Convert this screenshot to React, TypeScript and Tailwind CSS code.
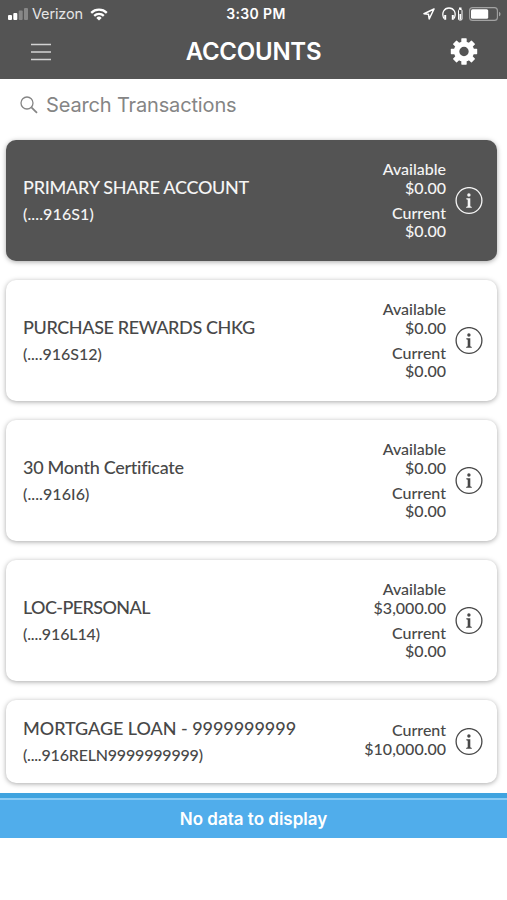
import clsx from 'clsx';

type Balance = {
	label: string;
	amount: string;
};

type Account = {
	name: string;
	nameClass: string;
	mask: string;
	maskClass: string;
	balances: Balance[];
	primary?: boolean;
	compact?: boolean;
};

const accounts: Account[] = [
	{
		name: 'PRIMARY SHARE ACCOUNT',
		nameClass: 'tracking-[-0.26px]',
		mask: '(....916S1)',
		maskClass: 'tracking-[0.13px]',
		primary: true,
		balances: [
			{ label: 'Available', amount: '$0.00' },
			{ label: 'Current', amount: '$0.00' },
		],
	},
	{
		name: 'PURCHASE REWARDS CHKG',
		nameClass: 'tracking-[-0.38px]',
		mask: '(....916S12)',
		maskClass: 'tracking-[0px]',
		balances: [
			{ label: 'Available', amount: '$0.00' },
			{ label: 'Current', amount: '$0.00' },
		],
	},
	{
		name: '30 Month Certificate',
		nameClass: 'tracking-[-0.28px]',
		mask: '(....916I6)',
		maskClass: 'tracking-[0.1px]',
		balances: [
			{ label: 'Available', amount: '$0.00' },
			{ label: 'Current', amount: '$0.00' },
		],
	},
	{
		name: 'LOC-PERSONAL',
		nameClass: 'tracking-[-0.6px]',
		mask: '(....916L14)',
		maskClass: 'tracking-[-0.12px]',
		balances: [
			{ label: 'Available', amount: '$3,000.00' },
			{ label: 'Current', amount: '$0.00' },
		],
	},
	{
		name: 'MORTGAGE LOAN - 9999999999',
		nameClass: 'tracking-[-0.05px]',
		mask: '(....916RELN9999999999)',
		maskClass: 'tracking-[-0.19px]',
		compact: true,
		balances: [{ label: 'Current', amount: '$10,000.00' }],
	},
];

function StatusBar() {
	return (
		<div className="grid h-7 grid-cols-3 items-center text-white">
			<div className="flex items-center pl-2">
				<svg width="20" height="14" viewBox="0 0 20 14" fill="currentColor">
					<rect x="0" y="8" width="4" height="5" rx="1" />
					<rect x="5.3" y="6" width="4" height="7" rx="1" />
					<rect x="10.7" y="3.5" width="4" height="9.5" rx="1" opacity=".3" />
					<rect x="16" y="1" width="4" height="12" rx="1" opacity=".3" />
				</svg>
				<span className="ml-1 text-[14.5px] leading-none tracking-[-0.15px] text-[#e6e6e6]">Verizon</span>
				<svg className="ml-[7px]" width="18" height="13" viewBox="0 0 18 13" fill="none" stroke="currentColor" strokeWidth="2.3">
					<path d="M1.2 4.8a11.2 11.2 0 0 1 15.6 0" />
					<path d="M4.2 7.9a6.9 6.9 0 0 1 9.6 0" />
					<path d="M9 12.6 6.3 9.9a3.9 3.9 0 0 1 5.4 0z" fill="currentColor" stroke="none" />
				</svg>
			</div>
			<span className="pl-[5px] text-center text-[14px] font-semibold leading-none tracking-[0.35px]">3:30 PM</span>
			<div className="flex items-center justify-end pr-1.5">
				<svg width="12" height="12" viewBox="0 0 12 12" fill="none" stroke="currentColor" strokeWidth="1.5" strokeLinejoin="round">
					<path d="M11 1 1 5.7l4.5.6.7 4.7z" />
				</svg>
				<svg className="ml-[7px]" width="21" height="14" viewBox="0 0 21 14" fill="none" stroke="currentColor">
					<path d="M1.8 11.5C-.8 5.5 2.3 1 7 1s7.8 4.5 5.2 10.5" strokeWidth="1.3" />
					<path d="M3.2 8v4.8M10.8 8v4.8" strokeWidth="2" />
					<rect x="16.5" y="2.5" width="3.5" height="10.5" rx="1" />
					<path d="M17 1.2h2.5M18.25 7v5.5" strokeWidth="1.6" />
				</svg>
				<svg className="ml-1.5" width="32" height="14" viewBox="0 0 32 14">
					<rect x=".6" y=".6" width="27.8" height="12.8" rx="3" fill="none" stroke="#a3a3a3" strokeWidth="1.1" />
					<rect x="2" y="2.3" width="17.2" height="9.4" rx="1.5" fill="white" />
					<path d="M30 4.7c2 .8 2 3.8 0 4.6z" fill="#a3a3a3" />
				</svg>
			</div>
		</div>
	);
}

function MenuIcon() {
	return (
		<svg width="20" height="18" viewBox="0 0 20 18" stroke="#d2d2d2" strokeWidth="1.7">
			<path d="M0 1.5h20M0 9h20M0 16.5h20" />
		</svg>
	);
}

function GearIcon() {
	return (
		<svg width="28" height="28" viewBox="-14 -13.5 28 28" fill="none">
			<circle r="7.4" stroke="white" strokeWidth="5.4" />
			{[0, 45, 90, 135, 180, 225, 270, 315].map((deg) => (
				<rect key={deg} x="-2.7" y="-13.2" width="5.4" height="5" rx=".6" fill="white" transform={`rotate(${deg})`} />
			))}
		</svg>
	);
}

function InfoIcon() {
	return (
		<svg width="28" height="28" viewBox="0 0 28 28" fill="currentColor">
			<circle cx="14" cy="13.5" r="12.9" fill="none" stroke="currentColor" strokeWidth="1.3" />
			<circle cx="13.9" cy="8" r="1.7" />
			<path d="M11.3 11.3h4v8l1.5.6v.8h-5.7v-.8l1.6-.6v-6.6l-1.4-.5z" />
		</svg>
	);
}

function AccountCard({ account }: { account: Account }) {
	return (
		<li
			className={clsx(
				'flex items-center rounded-[10px] pl-[17px] pr-3.5 shadow-[0_1px_5px_rgba(0,0,0,0.34)]',
				account.compact ? 'h-[83px]' : 'h-[121px]',
				account.primary ? 'bg-[#545454] text-[#f5f5f5]' : 'bg-white text-[#484848]',
			)}
		>
			<div className="flex-1 whitespace-nowrap pb-px">
				<p className={clsx('text-[18px] leading-[29px]', account.nameClass)}>{account.name}</p>
				<p className={clsx('-mt-0.5 text-[16px] leading-[27px]', account.maskClass)}>{account.mask}</p>
			</div>
			<div className={clsx('space-y-1.5 text-right text-[16px] leading-[18.7px]', account.compact && 'pb-1')}>
				{account.balances.map((balance) => (
					<div key={balance.label}>
						<p>{balance.label}</p>
						<p>{balance.amount}</p>
					</div>
				))}
			</div>
			<button className="ml-[9px]" aria-label="Account details">
				<InfoIcon />
			</button>
		</li>
	);
}

export default function App() {
	return (
		<div className="h-[900px] w-[507px] overflow-hidden bg-white font-['Inter','Liberation_Sans',sans-serif]">
			<header className="h-[79px] bg-[#545454]">
				<StatusBar />
				<div className="flex h-[47px] items-center justify-between pl-[31px] pr-[29px]">
					<button aria-label="Menu">
						<MenuIcon />
					</button>
					<h1 className="pl-[6px] text-[24px] font-semibold tracking-[-0.25px] text-white">ACCOUNTS</h1>
					<button aria-label="Settings">
						<GearIcon />
					</button>
				</div>
			</header>

			<div className="flex h-[51px] items-center pl-5 text-[#858585]">
				<svg width="18" height="18" viewBox="0 0 18 18" fill="none" stroke="currentColor" strokeWidth="1.3">
					<circle cx="7" cy="7" r="6" />
					<path d="m11.4 11.4 5.6 5.4" strokeWidth="1.8" />
				</svg>
				<span className="ml-2 text-[20px] tracking-[-0.15px]">Search Transactions</span>
			</div>

			<ul className="space-y-[19px] pb-2.5 pl-1.5 pr-2.5 pt-2.5 font-['Lato','Liberation_Sans',sans-serif] font-medium">
				{accounts.map((account) => (
					<AccountCard key={account.name} account={account} />
				))}
			</ul>

			<div className="border-t-[5px] border-[#3fa3df]">
				<p className="flex h-10 items-center justify-center border-t-2 border-[#8acbf5] bg-[#50adeb] pt-px text-[17px] font-semibold text-white">
					No data to display
				</p>
			</div>
		</div>
	);
}
